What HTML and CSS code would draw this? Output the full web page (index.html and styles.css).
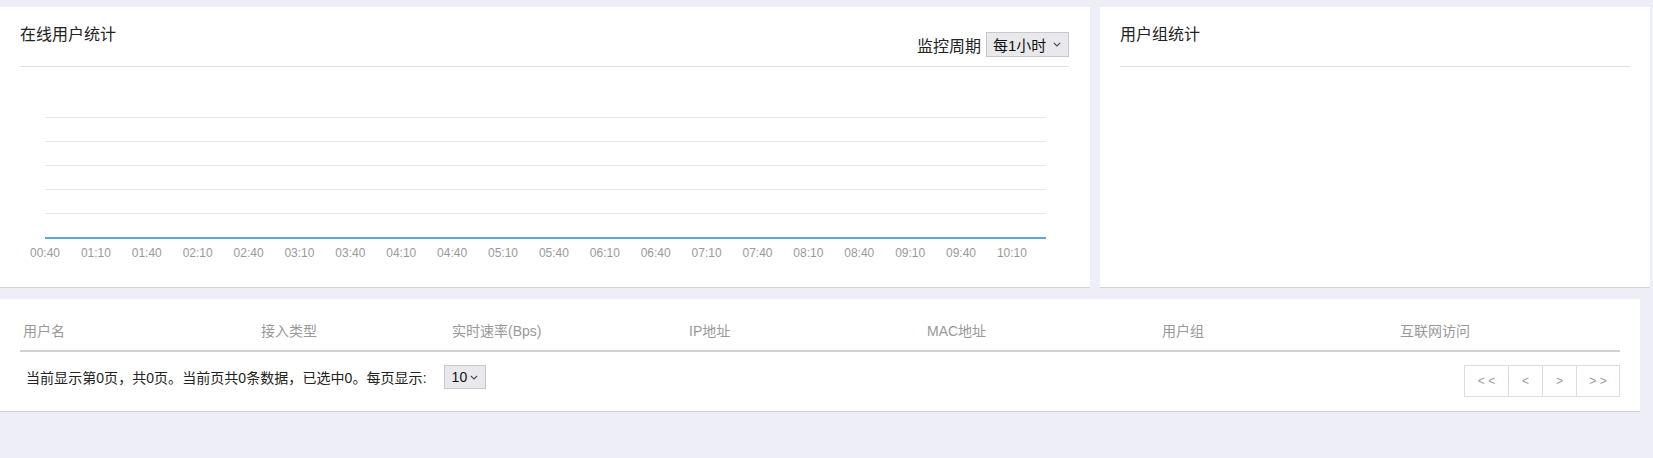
FILE: index.html
```html
<!DOCTYPE html>
<html>

<head>
    <title>在线用户</title>
    <link rel="stylesheet" href="styles.css">
</head>

<body>
    <div class="top-row">
        <div class="panel panel-online">
            <div class="panel-head">
                <h3 class="panel-title">在线用户统计</h3>
                <div class="period">
                    <span>监控周期</span>
                    <div class="fake-select period-select">
                        <span>每1小时</span>
                        <svg width="8" height="5" viewBox="0 0 8 5"><path d="M0.8 0.8 L4 4 L7.2 0.8" fill="none" stroke="#444" stroke-width="1.1"/></svg>
                    </div>
                </div>
            </div>

            <div class="chart">
                <div class="grid-line"></div>
                <div class="grid-line"></div>
                <div class="grid-line"></div>
                <div class="grid-line"></div>
                <div class="grid-line"></div>
                <div class="baseline"></div>
                <div class="axis">
                    <span>00:40</span><span>01:10</span><span>01:40</span><span>02:10</span><span>02:40</span>
                    <span>03:10</span><span>03:40</span><span>04:10</span><span>04:40</span><span>05:10</span>
                    <span>05:40</span><span>06:10</span><span>06:40</span><span>07:10</span><span>07:40</span>
                    <span>08:10</span><span>08:40</span><span>09:10</span><span>09:40</span><span>10:10</span>
                </div>
            </div>
        </div>

        <div class="panel panel-group">
            <div class="panel-head">
                <h3 class="panel-title">用户组统计</h3>
            </div>
        </div>
    </div>

    <div class="panel table-panel">
        <div class="table-head">
            <span>用户名</span>
            <span>接入类型</span>
            <span>实时速率(Bps)</span>
            <span>IP地址</span>
            <span>MAC地址</span>
            <span>用户组</span>
            <span>互联网访问</span>
        </div>
        <div class="table-foot">
            <div class="page-info">
                <span>当前显示第0页，共0页。当前页共0条数据，已选中0。每页显示:</span>
                <div class="fake-select size-select">
                    <span>10</span>
                    <svg width="8" height="5" viewBox="0 0 8 5"><path d="M0.8 0.8 L4 4 L7.2 0.8" fill="none" stroke="#444" stroke-width="1.1"/></svg>
                </div>
            </div>
            <div class="pager">
                <span class="first">&lt; &lt;</span>
                <span>&lt;</span>
                <span>&gt;</span>
                <span class="last">&gt; &gt;</span>
            </div>
        </div>
    </div>
</body>

</html>
```

FILE: styles.css
```css
body {
    background-color: #eeeef6;
    color: #222222;
    font-family: "Liberation Sans", "Noto Sans CJK SC", sans-serif;
    margin: 0;
    padding-top: 7px;
}

.top-row {
    display: flex;
    gap: 10px;
}

.panel {
    background-color: #ffffff;
    border-bottom: 1px solid #d2d2da;
    box-sizing: border-box;
}

.panel-online {
    width: 1090px;
    height: 281px;
    padding: 0 21px 0 20px;
}

.panel-group {
    width: 550px;
    height: 281px;
    padding: 0 20px;
}

.panel-head {
    display: flex;
    justify-content: space-between;
    height: 60px;
    border-bottom: 1px solid #e2e2e2;
    box-sizing: border-box;
}

.panel-title {
    margin: 0;
    padding-top: 17px;
    font-size: 16px;
    font-weight: normal;
    line-height: 22px;
    color: #222222;
}

.period {
    display: flex;
    align-items: center;
    gap: 5px;
    height: 25px;
    margin-top: 25px;
    font-size: 16px;
}

/* select box look */
.fake-select {
    display: flex;
    align-items: center;
    justify-content: space-between;
    box-sizing: border-box;
    background-color: #e9e9ed;
    border: 1px solid #c8c8cc;
    color: #111111;
}

.period-select {
    width: 83px;
    height: 25px;
    padding: 0 7px 0 6px;
    font-size: 15px;
}

.size-select {
    width: 42px;
    height: 24px;
    padding: 0 7px 0 7px;
    font-size: 14px;
    margin-left: 17px;
}

.chart {
    width: 1001px;
    margin: 50px 0 0 25px;
}

.grid-line {
    height: 23px;
    border-top: 1px solid #e6e6e6;
}

.baseline {
    border-top: 2px solid #5ea7d5;
}

.axis {
    display: flex;
    margin: 7px 0 0 -25.45px;
    font-size: 12px;
    line-height: 14px;
    color: #999999;
}

.axis span {
    width: 50.9px;
    flex: none;
    text-align: center;
}

.table-panel {
    width: 1640px;
    margin-top: 11px;
    padding: 0 20px;
}

.table-head {
    display: grid;
    grid-template-columns: 238px 191px 237px 238px 235px 238px 1fr;
    height: 53px;
    padding: 22px 0 0 3px;
    box-sizing: border-box;
    border-bottom: 2px solid #d2d2d2;
    font-size: 14px;
    line-height: 20px;
    color: #999999;
}

.table-foot {
    display: flex;
    justify-content: space-between;
    padding: 13px 0 14px 6px;
}

.page-info {
    display: flex;
    align-items: center;
    height: 24px;
    font-size: 14px;
    letter-spacing: 0.05px;
}

.pager {
    display: flex;
    height: 32px;
    border: 1px solid #dddddd;
    box-sizing: border-box;
    font-size: 12px;
    color: #999999;
}

.pager span {
    display: flex;
    align-items: center;
    justify-content: center;
    box-sizing: border-box;
    width: 34px;
    border-left: 1px solid #dddddd;
}

.pager .first {
    width: 43px;
    border-left: none;
}

.pager .last {
    width: 43px;
}
```
